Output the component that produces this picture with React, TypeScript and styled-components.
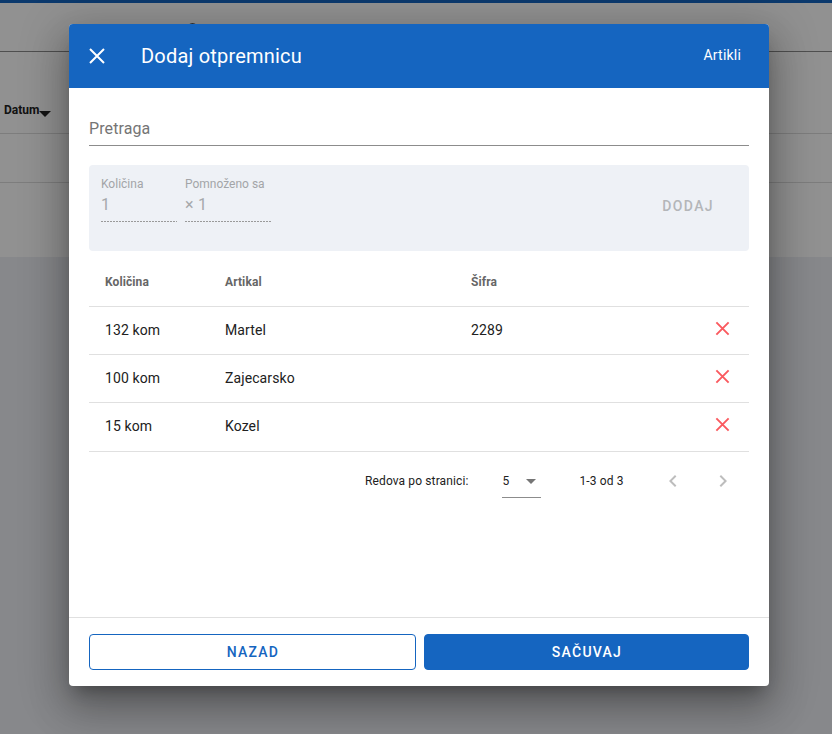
import React from 'react';
import styled, { createGlobalStyle } from 'styled-components';

const Global = createGlobalStyle`
  html, body { margin: 0; padding: 0; height: 100%; overflow: hidden; background: #f0f2f7; }
  body { font-family: Roboto, "Liberation Sans", sans-serif; }
  * { box-sizing: border-box; }
`;

const Page = styled.div`
  width: 832px;
  height: 734px;
  position: relative;
  overflow: hidden;
  background: #eeeff4;
`;
const TopBar = styled.div`
  height: 3px;
  background: #1565c0;
`;
const Sheet = styled.div`
  height: 254px;
  background: #fff;
  display: flex;
  flex-direction: column;
`;
const ToolRow = styled.div`
  height: 49px;
  border-bottom: 1px solid #8c8c8c;
  width: 100%;
  position: relative;
`;
const Knob = styled.div`
  position: absolute;
  left: 187px;
  top: 20px;
  width: 11px;
  height: 11px;
  border-radius: 50%;
  background: #555;
`;
const HeadRow = styled.div`
  height: 82px;
  display: flex;
  align-items: flex-end;
  padding: 0 0 16px 4px;
  border-bottom: 1px solid #dcdcdc;
  font-size: 12px;
  font-weight: 700;
  color: #222;
`;
const Arrow = styled.span`
  width: 0;
  height: 0;
  border: 6px solid transparent;
  border-top-color: #222;
  border-bottom: 0;
  margin-bottom: 0;
`;
const BgRow = styled.div`
  height: 49px;
  border-bottom: 1px solid #dcdcdc;
`;
const Scrim = styled.div`
  position: absolute;
  inset: 0;
  background: rgba(0, 0, 0, 0.43);
  display: flex;
  justify-content: center;
  align-items: flex-start;
  padding: 24px 0 0 6px;
`;
const Dialog = styled.div`
  width: 700px;
  height: 662px;
  background: #fff;
  border-radius: 4px;
  overflow: hidden;
  display: flex;
  flex-direction: column;
  box-shadow: 0 11px 15px -7px rgba(0,0,0,.28), 0 24px 38px 3px rgba(0,0,0,.2), 0 9px 46px 8px rgba(0,0,0,.18);
`;
const Header = styled.header`
  height: 64px;
  flex: none;
  background: #1565c0;
  color: #fff;
  display: flex;
  align-items: center;
  padding: 0 28px 0 16px;
`;
const CloseBtn = styled.span`
  width: 24px;
  height: 24px;
  display: flex;
  margin-right: 32px;
`;
const Title = styled.h2`
  margin: 0;
  flex: 1;
  font-size: 20px;
  font-weight: 400;
  letter-spacing: 0.2px;
`;
const HeaderAction = styled.span`
  font-size: 14px;
  letter-spacing: 0.2px;
  margin-top: -2px;
`;
const Body = styled.div`
  flex: 1;
  padding: 20px 20px 0;
  display: flex;
  flex-direction: column;
`;
const Search = styled.div`
  height: 38px;
  border-bottom: 1px solid #8c8c8c;
  font-size: 16px;
  color: #757575;
  padding-top: 11px;
  letter-spacing: 0.1px;
`;
const AddPanel = styled.div`
  margin-top: 19px;
  height: 86px;
  background: #eef1f6;
  border-radius: 4px;
  display: flex;
  padding: 12px 35px 0 12px;
  gap: 8px;
`;
const Field = styled.div<{ $w: number }>`
  width: ${p => p.$w}px;
  height: 45px;
  padding-bottom: 1px;
  background: repeating-linear-gradient(90deg, #9a9a9a 0 2px, transparent 2px 3px) bottom / 100% 1px no-repeat;
  display: flex;
  flex-direction: column;
`;
const FieldLabel = styled.span`
  font-size: 12px;
  line-height: 14px;
  color: #a3a5a8;
  white-space: nowrap;
`;
const FieldValue = styled.span`
  font-size: 16px;
  line-height: 22px;
  margin-top: 3px;
  letter-spacing: 0.3px;
  color: #a6a8ab;
`;
const AddBtn = styled.span`
  margin-left: auto;
  margin-top: 21px;
  font-size: 14px;
  line-height: 16px;
  font-weight: 500;
  letter-spacing: 1.4px;
  color: #b4b6b9;
  height: 16px;
`;
const Table = styled.div`
  margin-top: 7px;
  display: flex;
  flex-direction: column;
`;
const TableRow = styled.div<{ $h: number; $head?: boolean }>`
  display: grid;
  grid-template-columns: 120px 246px 1fr 54px;
  align-items: center;
  height: ${p => p.$h}px;
  border-bottom: 1px solid #e0e0e0;
  padding: 0 16px ${p => (p.$head ? 0 : 2)}px;
  font-size: 14px;
  letter-spacing: 0.1px;
  color: #212121;
`;
const HeadCell = styled.span`
  font-size: 12px;
  font-weight: 700;
  color: #666;
`;
const DeleteBtn = styled.span`
  display: flex;
  justify-self: end;
  width: 21px;
  height: 21px;
  margin-top: -3px;
`;
const Pager = styled.div`
  display: flex;
  align-items: center;
  height: 57px;
  padding-left: 276px;
  font-size: 12px;
  letter-spacing: 0.12px;
  color: #212121;
  white-space: nowrap;
`;
const PageSelect = styled.div`
  margin-left: 34px;
  width: 39px;
  height: 32px;
  margin-top: 2px;
  border-bottom: 1px solid #8c8c8c;
  display: flex;
  align-items: center;
  justify-content: space-between;
  padding: 0 5px 0 0;
`;
const Caret = styled.span`
  width: 0;
  height: 0;
  border: 5px solid transparent;
  border-top-color: #757575;
  border-bottom: 0;
`;
const PageInfo = styled.span`
  margin-left: 38px;
  width: 82px;
  flex: none;
`;
const PageNav = styled.span`
  display: flex;
  flex: none;
  width: 24px;
  height: 24px;
  & + & { margin-left: 26px; }
`;
const Footer = styled.footer`
  flex: none;
  height: 69px;
  border-top: 1px solid #e0e0e0;
  padding: 16px 20px;
  display: grid;
  grid-template-columns: 327px 325px;
  gap: 8px;
`;
const FooterBtn = styled.button<{ $solid?: boolean }>`
  height: 36px;
  border-radius: 4px;
  border: 1px solid #1565c0;
  background: ${p => (p.$solid ? '#1565c0' : '#fff')};
  color: ${p => (p.$solid ? '#fff' : '#1565c0')};
  font-family: inherit;
  font-size: 14px;
  font-weight: 500;
  letter-spacing: 1.25px;
  padding: 0 0 0 1px;
`;

const X = ({ c, s, w }: { c: string; s: number; w: number }) => (
  <svg width={s} height={s} viewBox="0 0 24 24" fill="none" stroke={c} strokeWidth={w}>
    <path d="M5 5 L19 19 M19 5 L5 19" />
  </svg>
);
const Chevron = ({ d }: { d: string }) => (
  <svg width="24" height="24" viewBox="0 0 24 24" fill="#bdbdbd">
    <path d={d} />
  </svg>
);

const rows = [
  ['132 kom', 'Martel', '2289'],
  ['100 kom', 'Zajecarsko', ''],
  ['15 kom', 'Kozel', ''],
];

export default function App() {
  return (
    <Page>
      <Global />
      <TopBar />
      <Sheet>
        <ToolRow><Knob /></ToolRow>
        <HeadRow>Datum<Arrow /></HeadRow>
        <BgRow />
      </Sheet>
      <Scrim>
        <Dialog>
          <Header>
            <CloseBtn><X c="#fff" s={24} w={2} /></CloseBtn>
            <Title>Dodaj otpremnicu</Title>
            <HeaderAction>Artikli</HeaderAction>
          </Header>
          <Body>
            <Search>Pretraga</Search>
            <AddPanel>
              <Field $w={76}>
                <FieldLabel>Količina</FieldLabel>
                <FieldValue>1</FieldValue>
              </Field>
              <Field $w={86}>
                <FieldLabel>Pomnoženo sa</FieldLabel>
                <FieldValue>× 1</FieldValue>
              </Field>
              <AddBtn>DODAJ</AddBtn>
            </AddPanel>
            <Table>
              <TableRow $h={49} $head>
                <HeadCell>Količina</HeadCell>
                <HeadCell>Artikal</HeadCell>
                <HeadCell>Šifra</HeadCell>
              </TableRow>
              {rows.map(r => (
                <TableRow $h={r[0] === '15 kom' ? 49 : 48} key={r[0]}>
                  <span>{r[0]}</span>
                  <span>{r[1]}</span>
                  <span>{r[2]}</span>
                  <DeleteBtn><X c="#fa5a5f" s={21} w={2.2} /></DeleteBtn>
                </TableRow>
              ))}
            </Table>
            <Pager>
              <span>Redova po stranici:</span>
              <PageSelect><span>5</span><Caret /></PageSelect>
              <PageInfo>1-3 od 3</PageInfo>
              <PageNav><Chevron d="M15.41 7.41 14 6l-6 6 6 6 1.41-1.41L10.83 12z" /></PageNav>
              <PageNav><Chevron d="M10 6 8.59 7.41 13.17 12l-4.58 4.59L10 18l6-6z" /></PageNav>
            </Pager>
          </Body>
          <Footer>
            <FooterBtn>NAZAD</FooterBtn>
            <FooterBtn $solid>SAČUVAJ</FooterBtn>
          </Footer>
        </Dialog>
      </Scrim>
    </Page>
  );
}
